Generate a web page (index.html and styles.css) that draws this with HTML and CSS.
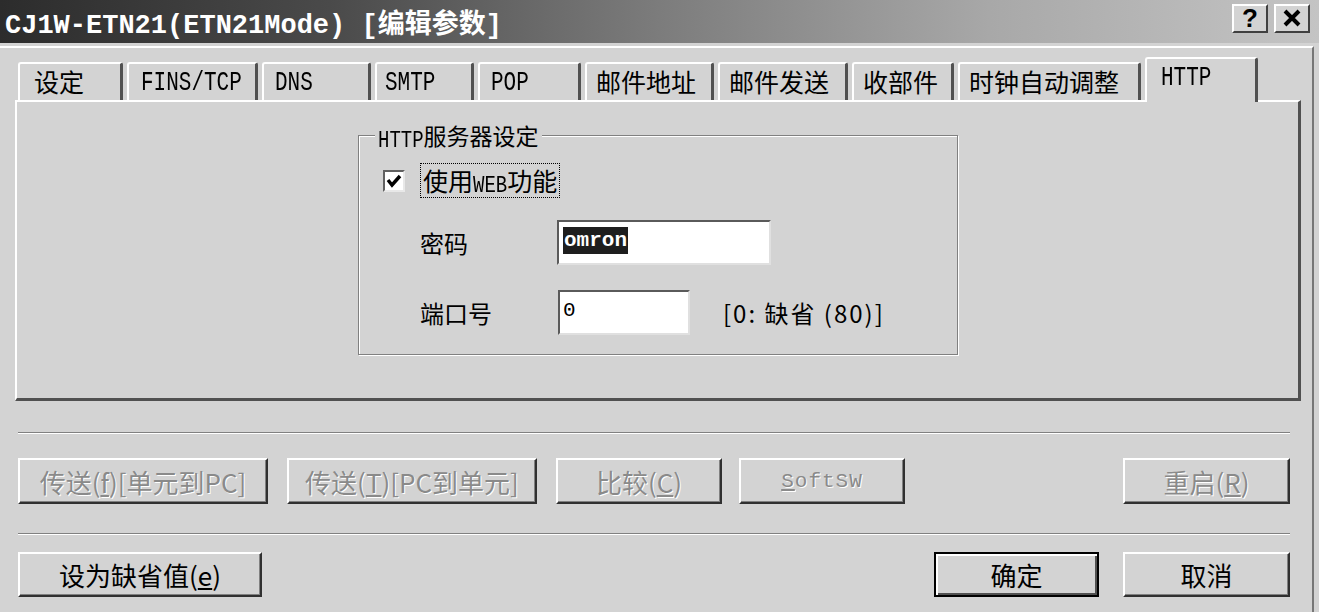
FILE: index.html
```html
<!DOCTYPE html>
<html lang="zh-CN">
<head>
    <meta charset="UTF-8">
    <title>CJ1W-ETN21 编辑参数</title>
    <link rel="stylesheet" href="styles.css">
</head>
<body>
    <div class="titlebar">
        <span class="title">CJ1W-ETN21(ETN21Mode) [编辑参数]</span>
        <div class="title-btns">
            <span class="tbtn tbtn-help">?</span>
            <span class="tbtn">
                <svg width="20" height="18" viewBox="0 0 20 18"><path d="M3 2 L17 16 M17 2 L3 16" stroke="#000" stroke-width="4"/></svg>
            </span>
        </div>
    </div>

    <div class="dialog">
        <!-- 标签页 -->
        <div class="tabs">
            <div class="tab">设定</div>
            <div class="tab en"><span class="tall">FINS/TCP</span></div>
            <div class="tab en"><span class="tall">DNS</span></div>
            <div class="tab en"><span class="tall">SMTP</span></div>
            <div class="tab en"><span class="tall">POP</span></div>
            <div class="tab">邮件地址</div>
            <div class="tab">邮件发送</div>
            <div class="tab">收部件</div>
            <div class="tab">时钟自动调整</div>
            <div class="tab en active"><span class="tall">HTTP</span></div>
        </div>

        <div class="panel">
            <div class="group">
                <div class="legend"><span class="en-s tall">HTTP</span>服务器设定</div>

                <div class="check-row">
                    <span class="checkbox">
                        <svg width="16" height="14" viewBox="0 0 16 14"><path d="M2 6 L6 11 L14 2" fill="none" stroke="#000" stroke-width="3.4"/></svg>
                    </span>
                    <span class="check-label">使用<span class="en-s tall">WEB</span>功能</span>
                </div>

                <div class="field-row">
                    <span class="field-label">密码</span>
                    <span class="input input-wide"><span class="selected">omron</span></span>
                </div>

                <div class="field-row port-row">
                    <span class="field-label">端口号</span>
                    <span class="input input-short">0</span>
                    <span class="hint">[0: 缺省 (80)]</span>
                </div>
            </div>
        </div>

        <div class="sep sep-first"></div>

        <div class="btn-row">
            <span class="btn disabled w250">传送(<u>f</u>)[单元到PC]</span>
            <span class="btn disabled w250">传送(<u>T</u>)[PC到单元]</span>
            <span class="btn disabled w166">比较(<u>C</u>)</span>
            <span class="btn disabled w166 mono"><u>S</u>oftSW</span>
            <span class="btn disabled w167 push-right">重启(<u>R</u>)</span>
        </div>

        <div class="sep sep-second"></div>

        <div class="btn-row btn-row-last">
            <span class="btn w244">设为缺省值(<u>e</u>)</span>
            <span class="btn default w165 push-right">确定</span>
            <span class="btn w167">取消</span>
        </div>
    </div>
</body>
</html>
```

FILE: styles.css
```css
body {
    margin: 0;
    width: 1319px;
    height: 612px;
    overflow: hidden;
    background-color: #d3d3d3;
    font-family: "Liberation Mono", "Noto Sans CJK SC", monospace;
    font-size: 24px;
    color: #000;
}

.titlebar {
    height: 43px;
    display: flex;
    align-items: center;
    justify-content: space-between;
    padding-left: 5px;
    box-sizing: border-box;
    background: linear-gradient(to right, #2c2c2c 0%, #4a4a4a 25%, #7c7c7c 50%, #a8a8a8 75%, #c4c4c4 100%);
}

.title {
    color: #fff;
    font-weight: bold;
    font-size: 27px;
    white-space: pre;
}

.title-btns {
    display: flex;
    gap: 6px;
    margin-right: 9px;
    margin-top: -7px;
}

.tbtn {
    width: 36px;
    height: 29px;
    box-sizing: border-box;
    display: flex;
    align-items: center;
    justify-content: center;
    background-color: #d3d3d3;
    border: 2px solid;
    border-color: #fff #404040 #404040 #fff;
    font-family: "Liberation Sans", sans-serif;
    font-weight: bold;
    font-size: 26px;
}

.dialog {
    margin-top: 3px;
    border-top: 2px solid #fff;
    border-right: 2px solid #777;
    width: 1314px;
    height: 567px;
    box-sizing: border-box;
}

.tall {
    display: inline-block;
    transform: scaleY(1.3);
}

/* 标签页 */
.tabs {
    display: flex;
    align-items: flex-end;
    margin-top: 9px;
    padding-left: 18px;
    height: 43px;
}

.tab {
    height: 38px;
    box-sizing: border-box;
    margin-right: 4px;
    padding-left: 11px;
    border-top: 2px solid #fff;
    border-left: 2px solid #fff;
    border-right: 3px solid #505050;
    border-radius: 3px 3px 0 0;
    font-family: "Noto Sans CJK SC", sans-serif;
    font-size: 25px;
    line-height: 34px;
    white-space: nowrap;
}

.tab.en {
    font-family: "Liberation Mono", monospace;
    font-size: 21px;
    line-height: 38px;
}

.tab:nth-child(1) { width: 105px; padding-left: 14px; }
.tab:nth-child(2) { width: 131px; padding-left: 12px; }
.tab:nth-child(3) { width: 109px; }
.tab:nth-child(4) { width: 99px; padding-left: 8px; }
.tab:nth-child(5) { width: 103px; }
.tab:nth-child(6) { width: 129px; padding-left: 9px; }
.tab:nth-child(7) { width: 130px; padding-left: 9px; }
.tab:nth-child(8) { width: 102px; padding-left: 9px; }
.tab:nth-child(9) { width: 183px; padding-left: 9px; }

.tab.active {
    width: 113px;
    height: 45px;
    margin-bottom: -2px;
    padding-left: 14px;
    position: relative;
    z-index: 1;
    background-color: #d3d3d3;
    line-height: 38px;
}

.panel {
    margin-left: 15px;
    width: 1286px;
    height: 301px;
    box-sizing: border-box;
    border-top: 2px solid #fff;
    border-left: 2px solid #fff;
    border-right: 3px solid #505050;
    border-bottom: 3px solid #505050;
    padding-top: 33px;
    padding-left: 341px;
}

.group {
    width: 600px;
    height: 220px;
    box-sizing: border-box;
    border: 1px solid #808080;
    box-shadow: inset 1px 1px 0 #fff, 1px 1px 0 #fff;
    padding-left: 24px;
}

.legend {
    display: table;
    margin-top: -15px;
    margin-left: -8px;
    padding: 0 3px;
    height: 28px;
    line-height: 28px;
    background-color: #d3d3d3;
    font-family: "Noto Sans CJK SC", sans-serif;
    font-size: 23px;
}

.en-s {
    font-family: "Liberation Mono", monospace;
    font-size: 19px;
}

.check-row {
    display: flex;
    align-items: center;
    gap: 15px;
    margin-top: 9px;
    height: 35px;
}

.checkbox {
    width: 22px;
    height: 22px;
    box-sizing: border-box;
    background-color: #fff;
    border: 2px solid;
    border-color: #606060 #e8e8e8 #e8e8e8 #606060;
    display: flex;
    align-items: center;
    justify-content: center;
}

.check-label {
    border: 1px dotted #000;
    height: 35px;
    box-sizing: border-box;
    padding: 0 2px;
    line-height: 32px;
    font-family: "Noto Sans CJK SC", sans-serif;
    font-size: 25px;
}

.field-row {
    display: flex;
    align-items: center;
    margin-top: 22px;
    margin-left: 37px;
    height: 45px;
}

.port-row {
    margin-top: 25px;
}

.field-label {
    width: 137px;
    font-family: "Noto Sans CJK SC", sans-serif;
    font-size: 24px;
}

.input {
    height: 45px;
    box-sizing: border-box;
    background-color: #fff;
    border: 2px solid;
    border-color: #5a5a5a #e0e0e0 #e0e0e0 #5a5a5a;
    padding: 5px 4px 0 4px;
    font-family: "Liberation Mono", monospace;
    font-size: 21px;
    line-height: 27px;
}

.input-wide {
    width: 214px;
}

.input-short {
    width: 132px;
    margin-left: 1px;
    padding-left: 3px;
}

.selected {
    background-color: #1e1e1e;
    color: #fff;
    font-weight: bold;
    padding: 2px 1px;
}

.hint {
    margin-left: 33px;
    font-family: "Noto Sans CJK SC", sans-serif;
    font-size: 24px;
    letter-spacing: 2px;
}

.sep {
    margin-left: 18px;
    width: 1272px;
    height: 2px;
    box-sizing: border-box;
    border-top: 1px solid #808080;
    border-bottom: 1px solid #fff;
}

.sep-first {
    margin-top: 31px;
}

.sep-second {
    margin-top: 29px;
}

.btn-row {
    display: flex;
    gap: 19px;
    padding-left: 18px;
    margin-top: 24px;
    width: 1290px;
    box-sizing: border-box;
}

.btn-row-last {
    margin-top: 17px;
}

.btn {
    height: 46px;
    box-sizing: border-box;
    display: flex;
    align-items: center;
    justify-content: center;
    background-color: #d3d3d3;
    border: 2px solid;
    border-color: #fff #303030 #303030 #fff;
    box-shadow: inset -1px -1px 0 #808080;
    font-family: "Noto Sans CJK SC", sans-serif;
    font-size: 26px;
    white-space: nowrap;
}

.btn.mono {
    font-family: "Liberation Mono", monospace;
    font-size: 21px;
    letter-spacing: 1px;
}

.btn.disabled {
    color: #8a8a8a;
    text-shadow: 1px 1px 0 #fff;
}

.btn-row-last .btn {
    height: 45px;
}

.btn.default {
    border: 2px solid #000;
    box-shadow: inset 2px 2px 0 #fff, inset -2px -2px 0 #505050;
}

.w250 { width: 250px; }
.w244 { width: 244px; }
.w166 { width: 166px; }
.w167 { width: 167px; }
.w165 { width: 165px; }

.btn-row .w166 + .w166 { margin-left: -2px; }

.push-right {
    margin-left: auto;
}

.btn-row-last .push-right + .btn {
    margin-left: 5px;
}
```
